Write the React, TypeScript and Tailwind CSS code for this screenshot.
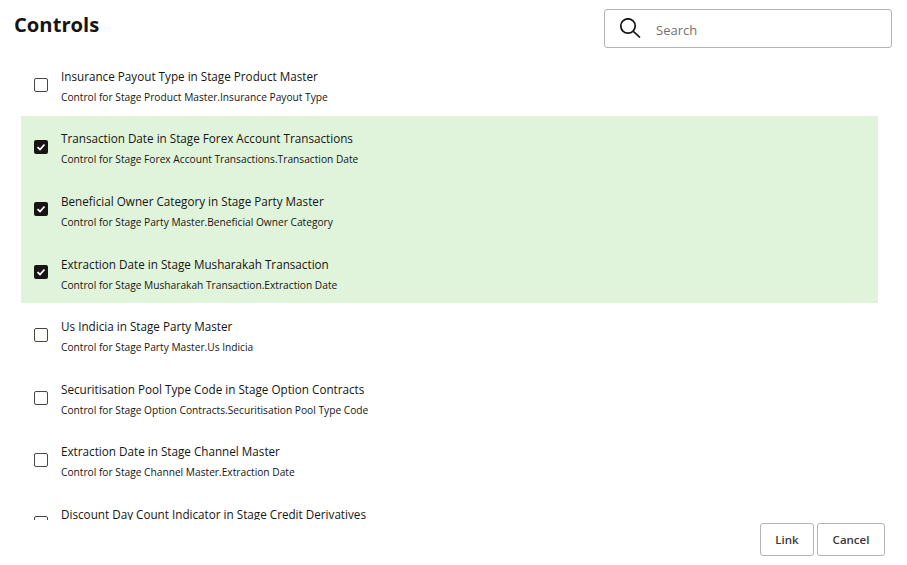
import React from 'react';

const controls = [
  { title: 'Insurance Payout Type in Stage Product Master', desc: 'Control for Stage Product Master.Insurance Payout Type', checked: false },
  { title: 'Transaction Date in Stage Forex Account Transactions', desc: 'Control for Stage Forex Account Transactions.Transaction Date', checked: true },
  { title: 'Beneficial Owner Category in Stage Party Master', desc: 'Control for Stage Party Master.Beneficial Owner Category', checked: true },
  { title: 'Extraction Date in Stage Musharakah Transaction', desc: 'Control for Stage Musharakah Transaction.Extraction Date', checked: true },
  { title: 'Us Indicia in Stage Party Master', desc: 'Control for Stage Party Master.Us Indicia', checked: false },
  { title: 'Securitisation Pool Type Code in Stage Option Contracts', desc: 'Control for Stage Option Contracts.Securitisation Pool Type Code', checked: false },
  { title: 'Extraction Date in Stage Channel Master', desc: 'Control for Stage Channel Master.Extraction Date', checked: false },
  { title: 'Discount Day Count Indicator in Stage Credit Derivatives', desc: 'Control for Stage Credit Derivatives.Discount Day Count Indicator', checked: false },
];

const Checkbox = ({ checked }: { checked: boolean }) =>
  checked ? (
    <div className="w-[14px] h-[14px] rounded-[2px] bg-[#161513] flex items-center justify-center shrink-0">
      <svg width="10" height="10" viewBox="0 0 10 10" fill="none">
        <path d="M1.5 5.2 L4 7.5 L8.5 2.5" stroke="#fff" strokeWidth="1.8" />
      </svg>
    </div>
  ) : (
    <div className="w-[14px] h-[14px] mt-[1px] rounded-[2px] border border-[#4a4642] bg-white shrink-0" />
  );

const App = () => {
  return (
    <div className="w-[907px] h-[565px] bg-white text-[#161513] overflow-hidden flex flex-col font-['Open_Sans','Liberation_Sans',sans-serif]">
      <div className="flex justify-between pl-[14px] pr-[15px] pt-[9px] h-[53px] shrink-0">
        <h1 className="text-[20.2px] leading-[31px] font-bold">Controls</h1>
        <div className="w-[288px] h-[39px] border border-[#b5b3b0] rounded-[3px] flex items-center pl-[15px]">
          <svg width="21" height="20" viewBox="0 0 21 20" fill="none" stroke="#161513" strokeWidth="1.7" className="shrink-0 -mt-[1px]">
            <circle cx="8" cy="8" r="7.2" />
            <path d="M13.3 13.3 L20 19.5" />
          </svg>
          <span className="ml-[15px] mt-[4px] text-[13px] text-[#76716b]">Search</span>
        </div>
      </div>
      <div className="h-[467px] shrink-0 overflow-hidden px-[21px]">
        <div className="w-[857px]">
          {controls.map((c) => (
            <div key={c.title} className={`h-[62.6px] flex items-center pl-[13px] ${c.checked ? 'bg-[#e0f4dc]' : ''}`}>
              <Checkbox checked={c.checked} />
              <div className="ml-[13px] mt-[3px]">
                <div className="text-[11.7px] leading-[17px]">{c.title}</div>
                <div className="text-[10.2px] leading-[14px] mt-[5px]">{c.desc}</div>
              </div>
            </div>
          ))}
        </div>
      </div>
      <div className="flex justify-end gap-[3px] pr-[22px] mt-[3px]">
        <button className="w-[54px] h-[33px] border border-[#b5b3b0] rounded-[3px] text-[11.5px] font-semibold text-[#3a3835] bg-white">Link</button>
        <button className="w-[68px] h-[33px] border border-[#b5b3b0] rounded-[3px] text-[11.5px] font-semibold text-[#3a3835] bg-white">Cancel</button>
      </div>
    </div>
  );
};

export default App;
